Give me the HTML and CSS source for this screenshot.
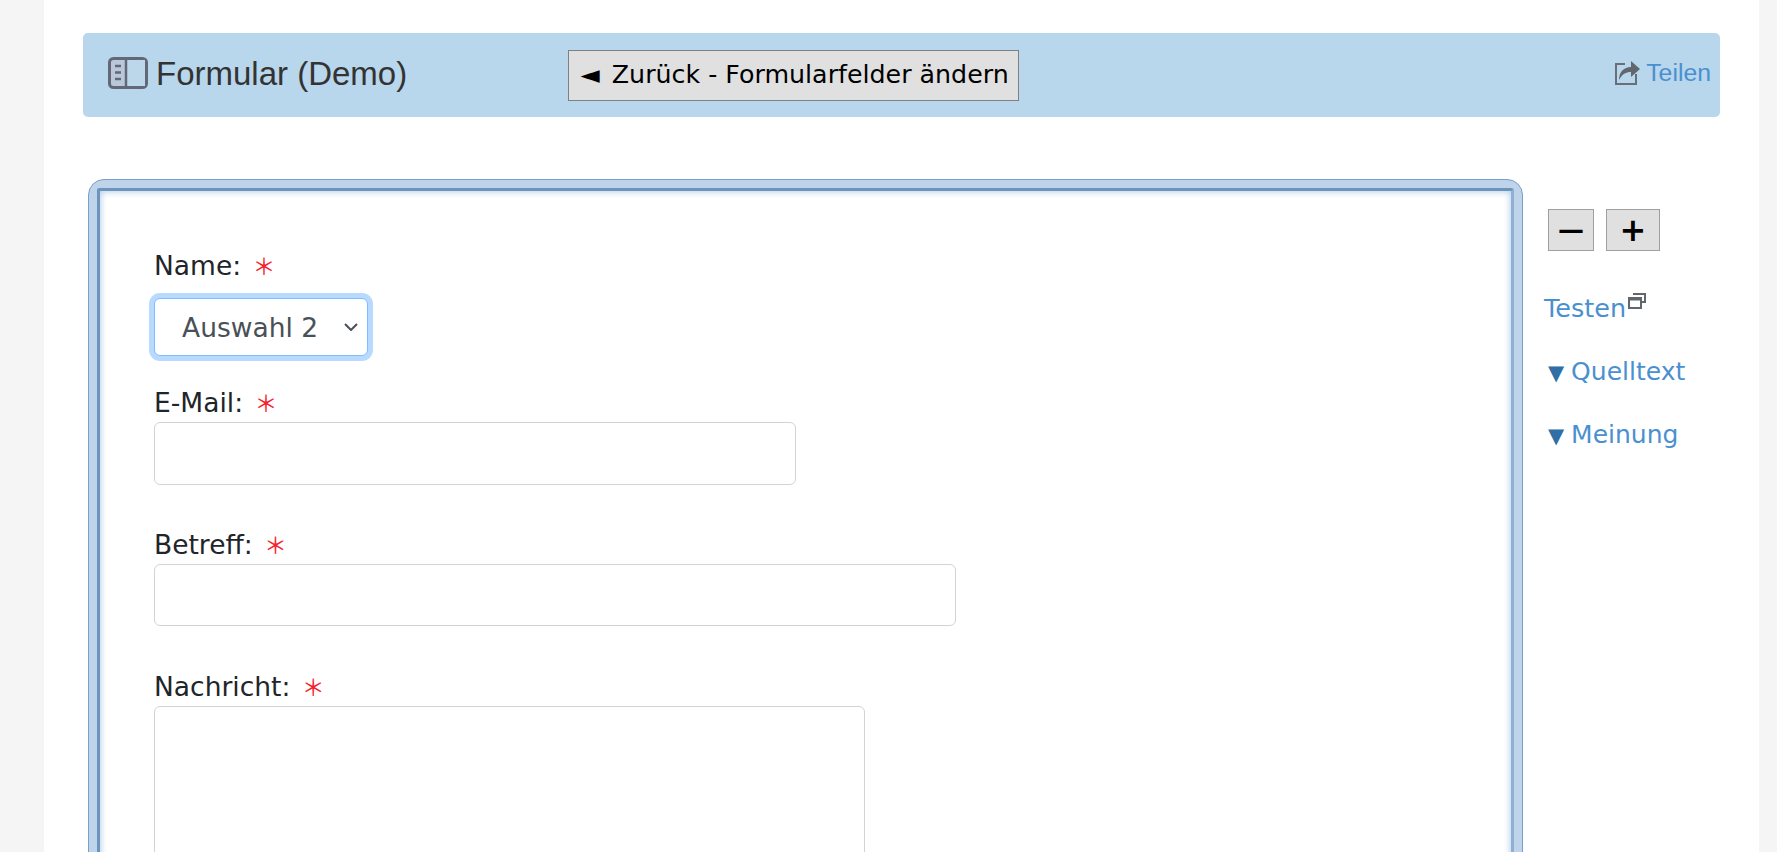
FILE: index.html
```html
<!DOCTYPE html>
<html lang="de">

<head>
    <meta charset="UTF-8">
    <title>Formular (Demo)</title>
    <link rel="stylesheet" href="styles.css">
</head>

<body>
    <div class="page">
        <div class="title-bar">
            <svg class="book-icon" viewBox="0 0 40 32" width="40" height="32">
                <rect x="1.5" y="1.5" width="37" height="29" rx="4" fill="#b8c8d8" stroke="#626878" stroke-width="3"/>
                <rect x="19" y="3" width="18" height="26" fill="#bcd6ea"/>
                <path d="M18 2v28" stroke="#626878" stroke-width="2.5"/>
                <path d="M7 9h6M7 15.500h6M7 22h6" stroke="#626878" stroke-width="2.500"/>
            </svg>
            <span class="title">Formular (Demo)</span>
            <button class="back-btn"><span class="back-arrow">◄</span> Zurück - Formularfelder ändern</button>
            <a class="share" href="#">
                <svg class="share-icon" viewBox="0 0 25 24" width="25" height="24">
                    <path d="M21 13v10H1V3h9" fill="none" stroke="#6a6f76" stroke-width="2"/>
                    <path d="M4 19c0-8 5-13 12-13V0l9 8-9 8v-5c-5 0-9 2-12 8z" fill="#62676d"/>
                </svg>
                Teilen
            </a>
        </div>

        <div class="main">
            <div class="frame">
                <div class="frame-inner">
                    <form class="demo-form">
                        <label class="field-label">Name: <span class="req">＊</span></label>
                        <select class="form-control select-name">
                            <option>Auswahl 2</option>
                        </select>

                        <label class="field-label">E-Mail: <span class="req">＊</span></label>
                        <input class="form-control input-mail" type="text">

                        <label class="field-label">Betreff: <span class="req">＊</span></label>
                        <input class="form-control input-subject" type="text">

                        <label class="field-label">Nachricht: <span class="req">＊</span></label>
                        <textarea class="form-control input-message"></textarea>
                    </form>
                </div>
            </div>

            <div class="side">
                <div class="zoom-btns">
                    <button class="zoom-btn minus">—</button>
                    <button class="zoom-btn plus">+</button>
                </div>
                <a class="side-link test-link" href="#">Testen<svg class="window-icon" viewBox="0 0 18 16" width="18" height="16">
                        <path d="M5 1h12v8h-4" fill="#fff" stroke="#62676d" stroke-width="2"/>
                        <rect x="1" y="5" width="12" height="10" fill="#fff" stroke="#62676d" stroke-width="2"/>
                        <path d="M1 6h12" stroke="#62676d" stroke-width="3"/>
                    </svg></a>
                <a class="side-link toggle" href="#"><span class="arrow">▼</span> Quelltext</a>
                <a class="side-link toggle" href="#"><span class="arrow">▼</span> Meinung</a>
            </div>
        </div>
    </div>
</body>

</html>
```

FILE: styles.css
```css
html, body {
    height: 852px;
    overflow: hidden;
}

body {
    margin: 0;
    background-color: #f5f5f5;
    font-family: "DejaVu Sans", Verdana, sans-serif;
    color: #212529;
}

.page {
    margin: 0 18px 0 44px;
    height: 852px;
    padding: 33px 39px 0;
    background-color: #fff;
    box-sizing: border-box;
}

.title-bar {
    display: flex;
    align-items: center;
    height: 84px;
    padding: 0 9px 0 25px;
    background-color: #b8d6ec;
    border-radius: 5px;
}

.book-icon {
    flex: none;
    margin-bottom: 4px;
}

.title {
    flex: none;
    margin: 0 0 3px 8px;
    width: 251px;
    font-family: "Liberation Sans", Arial, sans-serif;
    font-size: 33px;
    white-space: nowrap;
    color: #333;
}

.back-btn {
    margin: 1px 0 0 161px;
    width: 451px;
    height: 51px;
    padding: 0 0 2px 2px;
    background-color: #e0e0e0;
    border: 1px solid #808080;
    font-family: "DejaVu Sans", Verdana, sans-serif;
    font-size: 25.3px;
    color: #000;
}

.back-arrow {
    margin-right: 4px;
}

.share {
    display: flex;
    align-items: center;
    gap: 6px;
    margin: 0 0 4px auto;
    font-family: "Liberation Sans", Arial, sans-serif;
    font-size: 24.8px;
    color: #4a90d0;
    text-decoration: none;
}

.main {
    display: flex;
    margin: 62px 0 0 5px;
}

.frame {
    flex: none;
    width: 1435px;
    height: 900px;
    box-sizing: border-box;
    padding: 8px;
    background-color: #bfd4ea;
    border: 1px solid #76a0cc;
    border-radius: 16px;
}

.frame-inner {
    height: 100%;
    box-sizing: border-box;
    background-color: #fff;
    border: 3px solid #6c94bd;
    border-right-color: #8fb0d4;
    border-radius: 3px;
    box-shadow: inset 0 0 6px 1px #b5cfe9;
}

.demo-form {
    padding: 58px 0 0 54px;
}

.field-label {
    display: block;
    margin-bottom: 2px;
    font-size: 26.5px;
    line-height: 34px;
}

.req {
    margin-left: 3px;
    font-family: "Noto Sans CJK JP", sans-serif;
    font-size: 23px;
    line-height: 0;
    color: #f5222d;
}

.form-control {
    display: block;
    box-sizing: border-box;
    background-color: #fff;
    border: 1px solid #ced4da;
    border-radius: 6px;
    font-family: "DejaVu Sans", Verdana, sans-serif;
    font-size: 26.5px;
    color: #495057;
    outline: none;
}

.select-name {
    appearance: none;
    width: 214px;
    height: 58px;
    margin: 15px 0 30px;
    padding-left: 27px;
    background-image: url("data:image/svg+xml,%3Csvg xmlns='http://www.w3.org/2000/svg' width='14' height='8'%3E%3Cpath d='M1 1l6 6 6-6' fill='none' stroke='%23495057' stroke-width='2'/%3E%3C/svg%3E");
    background-repeat: no-repeat;
    background-position: right 9px center;
    border-color: #80bdff;
    box-shadow: 0 0 0 5px #b9daff;
}

.input-mail {
    width: 642px;
    height: 63px;
    margin-bottom: 43px;
}

.input-subject {
    width: 802px;
    height: 62px;
    margin-bottom: 44px;
}

.input-message {
    width: 711px;
    height: 400px;
    resize: none;
}

.side {
    display: flex;
    flex-direction: column;
    padding: 30px 0 0 21px;
}

.zoom-btns {
    display: flex;
    gap: 12px;
    margin-left: 4px;
}

.zoom-btn {
    height: 42px;
    padding: 0;
    background-color: #e0e0e0;
    border: 1px solid #a0a0a0;
    font-family: "DejaVu Sans", Verdana, sans-serif;
    font-weight: bold;
    line-height: 1;
    color: #000;
}

.minus {
    width: 46px;
    font-size: 26px;
}

.plus {
    width: 54px;
    font-size: 32px;
}

.side-link {
    font-size: 25px;
    line-height: 34px;
    color: #4a90d0;
    text-decoration: none;
}

.test-link {
    margin: 40px 0 1px;
    font-size: 25.5px;
}

.window-icon {
    margin-left: 2px;
    vertical-align: 8px;
}

.toggle {
    margin: 29px 0 0 4px;
}

.arrow {
    margin-right: -1px;
    font-size: 21px;
    line-height: 1;
    color: #2f6fa5;
}
```
